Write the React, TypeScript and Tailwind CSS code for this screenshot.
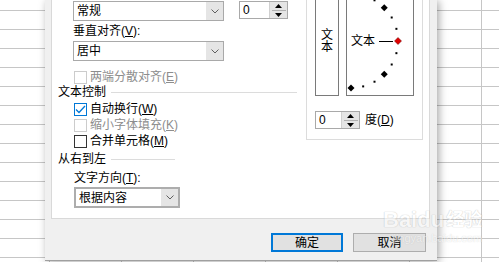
import React from "react";

const font = "font-['Liberation_Sans','Noto_Sans_CJK_SC',sans-serif]";

const Chevron = () => (
  <svg width="8" height="5" viewBox="0 0 8 5">
    <polyline points="0.5,0.5 4,4 7.5,0.5" fill="none" stroke="#606060" strokeWidth="1" />
  </svg>
);

const Select = ({ value, w, h, thick }: { value: string; w: string; h: string; thick?: boolean }) => (
  <div className={`${w} ${h} flex bg-white ${thick ? "border-2 border-[#adadad]" : "border border-[#a9a9a9]"}`}>
    <div className="flex-1 pl-[3px] flex items-center text-[12px] leading-[14px] text-black">{value}</div>
    <div className="w-[17px] bg-[#e5e5e5] flex items-center justify-center">
      <Chevron />
    </div>
  </div>
);

const Spinner = ({ w }: { w: string }) => (
  <div className={`${w} h-[18px] flex bg-white border border-[#a9a9a9]`}>
    <div className="flex-1 pl-[3px] flex items-center text-[12px] leading-[14px]">0</div>
    <div className="w-[18px] bg-[#e5e5e5] flex flex-col items-center justify-center gap-[3px] border-l border-[#d0d0d0]">
      <svg width="7" height="4" viewBox="0 0 7 4"><polygon points="3.5,0 7,4 0,4" fill="#000" /></svg>
      <div className="w-[14px] h-px bg-[#b0b0b0] -my-[1px]" />
      <svg width="7" height="4" viewBox="0 0 7 4"><polygon points="0,0 7,0 3.5,4" fill="#000" /></svg>
    </div>
  </div>
);

const Check = ({ label, k, checked, disabled, mt }: { label: string; k: string; checked?: boolean; disabled?: boolean; mt: string }) => (
  <div className={`${mt} ml-[22px] h-[16px] flex items-center gap-[3px]`}>
    <div
      className={`w-[13px] h-[13px] bg-white border flex items-center justify-center ${
        checked ? "border-[#0078d7]" : disabled ? "border-[#cccccc]" : "border-[#333333]"
      }`}
    >
      {checked && (
        <svg width="11" height="9" viewBox="0 0 11 9">
          <polyline points="1,4.5 4,7.5 10,1" fill="none" stroke="#0078d7" strokeWidth="1.3" />
        </svg>
      )}
    </div>
    <span className={`text-[12px] leading-[14px] ${disabled ? "text-[#8d8d8d]" : "text-black"}`}>
      {label}(<u>{k}</u>)
    </span>
  </div>
);

const Heading = ({ text, mt, lineEnd }: { text: string; mt: string; lineEnd: string }) => (
  <div className={`${mt} ml-[6px] h-[14px] flex items-center gap-[5px]`}>
    <span className="text-[12px] leading-[14px] text-black">{text}</span>
    <div className={`h-px bg-[#dcdcdc] ${lineEnd}`} />
  </div>
);

const Grid = () => (
  <>
    <div className="absolute inset-0 flex flex-col">
      <div className="h-[11px] shrink-0 border-b border-[#c6c6c6]" />
      {Array.from({ length: 14 }).map((_, i) => (
        <div key={i} className="h-[19px] shrink-0 border-b border-[#c6c6c6]" />
      ))}
    </div>
    <div className="absolute inset-0 flex">
      <div className="w-[50px] shrink-0 border-r border-[#c6c6c6]" />
      {Array.from({ length: 7 }).map((_, i) => (
        <div key={i} className="w-[72px] shrink-0 border-r border-[#c6c6c6]" />
      ))}
    </div>
  </>
);

const Dial = () => {
  const cx = 5;
  const cy = 41;
  const r = 47;
  const pts = [];
  for (let a = -90; a <= 90; a += 15) {
    const rad = (a * Math.PI) / 180;
    const x = cx + r * Math.cos(rad);
    const y = cy - r * Math.sin(rad);
    if (a === 0) {
      pts.push(<polygon key={a} points={`${x},${y - 3.5} ${x + 3.5},${y} ${x},${y + 3.5} ${x - 3.5},${y}`} fill="#e00000" stroke="#600" strokeWidth="0.5" />);
    } else if (a % 45 === 0) {
      pts.push(<polygon key={a} points={`${x},${y - 3.5} ${x + 3.5},${y} ${x},${y + 3.5} ${x - 3.5},${y}`} fill="#000" />);
    } else {
      pts.push(<rect key={a} x={x - 1} y={y - 1} width="2" height="2" fill="#000" />);
    }
  }
  return (
    <svg className="absolute left-[-1px] top-0" width="70" height="96" viewBox="0 0 70 96">
      <line x1="33" y1="41.5" x2="47" y2="41.5" stroke="#000" strokeWidth="1" />
      {pts}
    </svg>
  );
};

export default function App() {
  return (
    <div className={`relative w-[499px] h-[262px] overflow-hidden bg-white ${font}`}>
      <Grid />

      {/* dialog */}
      <div className="absolute left-[45px] top-0 w-[392px] h-[261px] bg-[#f0f0f0] border-b border-[#a0a0a0] shadow-[2px_1px_8px_rgba(0,0,0,0.35)] flex flex-col">
        <div className="ml-[6px] w-[379px] h-[219px] bg-white border border-t-0 border-[#d9d9d9] flex">
          {/* left column */}
          <div className="w-[254px] shrink-0 flex flex-col">
            <div className="mt-[1px] ml-[21px] flex gap-[15px]">
              <Select value="常规" w="w-[151px]" h="h-[20px]" />
              <Spinner w="w-[49px]" />
            </div>
            <div className="mt-[3px] ml-[21px] h-[14px] text-[12px] leading-[14px]">
              垂直对齐(<u>V</u>):
            </div>
            <div className="mt-[3px] ml-[21px]">
              <Select value="居中" w="w-[151px]" h="h-[20px]" />
            </div>
            <Check mt="mt-[8px]" label="两端分散对齐" k="E" disabled />
            <Heading text="文本控制" mt="mt-0" lineEnd="w-[186px]" />
            <Check mt="mt-[2px]" label="自动换行" k="W" checked />
            <Check mt="mt-0" label="缩小字体填充" k="K" disabled />
            <Check mt="mt-0" label="合并单元格" k="M" />
            <Heading text="从右到左" mt="mt-[3px]" lineEnd="w-[64px]" />
            <div className="mt-[5px] ml-[22px] h-[14px] text-[12px] leading-[14px]">
              文字方向(<u>T</u>):
            </div>
            <div className="mt-[2px] ml-[22px]">
              <Select value="根据内容" w="w-[106px]" h="h-[21px]" thick />
            </div>
          </div>

          {/* orientation group */}
          <div className="w-[117px] h-[140px] shrink-0 border border-t-0 border-[#dcdcdc] flex flex-col">
            <div className="ml-[8px] flex gap-[7px]">
              <div className="w-[24px] h-[96px] border border-t-0 border-[#7a7a7a] flex flex-col items-center pt-[29px] text-[12px] leading-[12px]">
                <span>文</span>
                <span>本</span>
              </div>
              <div className="relative w-[68px] h-[96px] border border-t-0 border-[#7a7a7a]">
                <Dial />
                <span className="absolute left-[4px] top-[34px] text-[12px] leading-[14px]">文本</span>
              </div>
            </div>
            <div className="mt-[15px] ml-[8px] flex items-center gap-[5px]">
              <Spinner w="w-[45px]" />
              <span className="text-[12px] leading-[14px]">
                度(<u>D</u>)
              </span>
            </div>
          </div>
        </div>

        <div className="mt-[14px] flex justify-end gap-[10px] pr-[11px]">
          <button className="w-[72px] h-[19px] bg-[#e1e1e1] border-2 border-[#0078d7] text-[12px] leading-[14px] text-black">
            确定
          </button>
          <button className="w-[73px] h-[19px] bg-[#e1e1e1] border border-[#adadad] text-[12px] leading-[14px] text-black">
            取消
          </button>
        </div>
      </div>

      {/* watermark */}
      <div className="absolute left-[383px] top-[208px] flex flex-col items-end opacity-45 pointer-events-none">
        <div className="flex items-end text-[22px] leading-[24px] font-bold text-white [text-shadow:0_0_1px_#999,0_0_1px_#999]">
          <span>Bai</span>
          <span>du</span>
          <span className="ml-[2px] text-[18px]">经验</span>
        </div>
        <div className="text-[11px] leading-[12px] text-white [text-shadow:0_0_1px_#999]">jingyan.baidu.com</div>
      </div>
    </div>
  );
}
